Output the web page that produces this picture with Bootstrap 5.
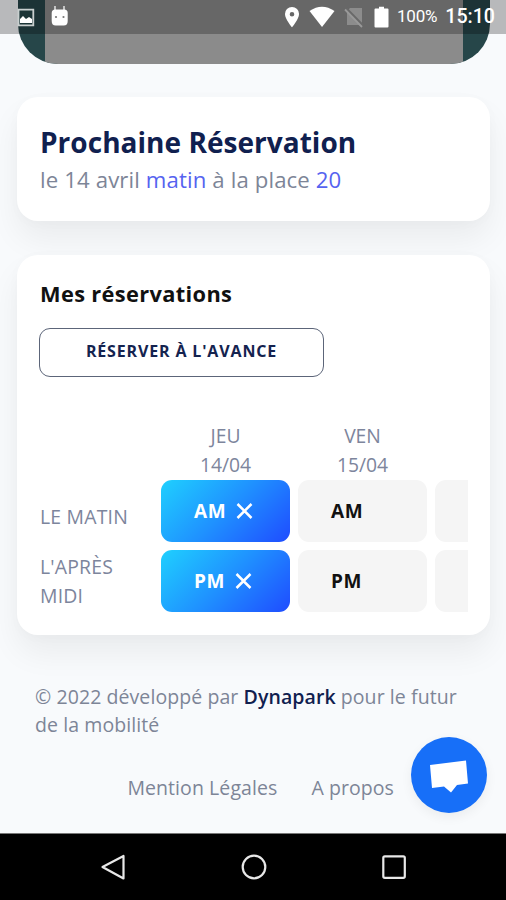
<!DOCTYPE html>
<html lang="fr">
<head>
<meta charset="utf-8">
<meta name="viewport" content="width=device-width, initial-scale=1">
<title>Dynapark</title>
<link href="https://cdn.jsdelivr.net/npm/bootstrap@5.3.0/dist/css/bootstrap.min.css" rel="stylesheet">
<style>
  body { font-family: "Open Sans", "Noto Sans", sans-serif; font-weight: 400; background: #f8fafc; color: #7d8597; }
  .screen { height: 900px; }
  .status-bar { height: 34px; background: rgba(0,0,0,.26); color: #fff; font-family: Roboto, sans-serif; font-weight: 400; z-index: 5; }
  .status-bar svg { flex: none; }
  .status-start { padding-left: 17px; gap: 16px; }
  .status-end { padding-right: 11px; }
  .battery-level { font-size: 17px; margin-left: 6px; letter-spacing: -.2px; }
  .clock { font-size: 19.6px; font-weight: 500; margin-left: 8px; margin-top: -1px; }
  .map-banner { height: 64px; margin: 0 16px 0 18px; padding: 0 27px; background: #264649; border-radius: 0 0 40px 40px; }
  .map-banner > div { background: #8b8b8b; }
  .panel { margin: 0 16px 0 17px; border: 0; border-radius: 21px; box-shadow: 0 18px 32px rgba(0,0,0,.06), 0 2px 14px rgba(0,0,0,.018); }
  .panel-next { height: 124px; margin-top: 33px; padding: 26px 23px 0; }
  .panel-list { height: 380px; margin-top: 34px; padding: 23px 22px 0 23px; }
  h1 { font-size: 28px; line-height: 38px; font-weight: 700; letter-spacing: .03px; color: #10204f; white-space: nowrap; }
  .next-text { font-size: 22.2px; line-height: 38px; letter-spacing: .12px; white-space: nowrap; }
  .next-text span { color: #5663f0; }
  h2 { font-size: 21.8px; line-height: 32px; font-weight: 700; letter-spacing: .35px; color: #111; }
  .btn-advance { width: 285px; height: 49px; margin-top: 18px; margin-left: -1px; border: 1px solid #5c6579; border-radius: 11px; color: #14234f; font-size: 16px; font-weight: 700; letter-spacing: .85px; }
  .slots { margin-top: 44px; display: grid; grid-template-columns: 113px repeat(3, 129px); grid-template-rows: 51px 62px 62px; column-gap: 8px; row-gap: 8px; overflow: hidden; }
  .slots .day { line-height: 29px; font-size: 19.3px; text-align: center; color: #7d859c; }
  .slots .period { font-size: 19.4px; letter-spacing: .2px; line-height: 29px; color: #7d859c; }
  .slots .period-am { padding-top: 10px; }
  .slot { border-radius: 11px; background: #f5f5f5; color: #111; font-weight: 700; font-size: 19px; letter-spacing: .6px; padding-left: 33px; }
  .slot.booked { background: linear-gradient(135deg, #1fd0fe 0%, #1f91ff 50%, #1f4cff 100%); color: #fff; gap: 10px; }
  footer { padding: 48px 30px 0 35px; font-size: 19.5px; letter-spacing: .08px; line-height: 28px; white-space: nowrap; }
  footer strong { color: #10204f; font-weight: 600; }
  .footer-links { margin-top: 35px; padding-right: 82px; gap: 34px; }
  .footer-links a { color: inherit; text-decoration: none; white-space: nowrap; }
  .chat { position: absolute; right: 19px; bottom: 87px; width: 76px; height: 76px; background: #176ff8; box-shadow: 0 4px 12px rgba(0,0,0,.06); padding: 0; }
  .nav-keys { height: 67px; background: #000; border-top: 1px solid #777; padding: 0 98px 0 99px; }
</style>
</head>
<body>
<div class="screen position-relative overflow-hidden d-flex flex-column">
  <header class="status-bar position-absolute top-0 start-0 w-100 d-flex justify-content-between align-items-center">
    <div class="status-start d-flex align-items-center">
      <svg width="18" height="34" viewBox="0 0 18 34"><path d="M1.500 9.700h14.800v15.600H1.500z" fill="#1b3436" stroke="#c9cfcf" stroke-width="1.800"/><path d="M3 23v-4l3-3 3 3 3-2 3 2v4z" fill="#fff"/></svg>
      <svg width="18" height="34" viewBox="0 0 18 34"><path d="M4 6v6M13 6v6" stroke="#ddd" stroke-width="1.600"/><path d="M.7 13q0-3.500 3.500-3.500h9q3.500 0 3.500 3.500v8q0 4.500-4 4.500h-8q-4 0-4-4.500z" fill="#fff"/><circle cx="5" cy="17" r="1.100" fill="#777"/><circle cx="12.500" cy="17" r="1.100" fill="#777"/></svg>
    </div>
    <div class="status-end d-flex align-items-center">
      <svg width="16" height="34" viewBox="-1 0 16 34"><path fill-rule="evenodd" d="M8 7a7 7 0 0 1 7 7.200C15 19 8 27.300 8 27.300S1 19 1 14.200A7 7 0 0 1 8 7zm0 5a2.300 2.300 0 1 0 0 4.600A2.300 2.300 0 0 0 8 12z" fill="#fff"/></svg>
      <svg class="ms-2" width="28" height="34" viewBox="-1 0 28 34"><path d="M1.500 11Q14 2.500 26.500 11L14 27z" fill="#fff"/></svg>
      <svg class="ms-2" width="20" height="34" viewBox="-1 0 20 34"><path d="M6 8h12v17H3V11z" fill="#8c8c8c"/><path d="M2 8.500l17 17.500" stroke="#696969" stroke-width="3"/><path d="M1 9.500l17 17.500" stroke="#999" stroke-width="1.800"/></svg>
      <svg class="ms-2" width="20" height="34" viewBox="0 0 20 34"><path d="M4.500 8.500H8V6.700h5v1.800h3.500q1 0 1 1v17q0 1-1 1h-12q-1 0-1-1v-17q0-1 1-1z" fill="#fff"/></svg>
      <span class="battery-level">100%</span>
      <span class="clock">15:10</span>
    </div>
  </header>

  <div class="map-banner flex-shrink-0 overflow-hidden"><div class="h-100"></div></div>

  <section class="card panel panel-next flex-shrink-0">
    <h1 class="mb-0">Prochaine Réservation</h1>
    <p class="next-text mb-0">le 14 avril <span>matin</span> à la place <span>20</span></p>
  </section>

  <section class="card panel panel-list flex-shrink-0">
    <h2 class="mb-0">Mes réservations</h2>
    <button class="btn btn-advance p-0 pb-1" type="button">RÉSERVER À L'AVANCE</button>
    <div class="slots">
      <div></div>
      <div class="day">JEU<br>14/04</div>
      <div class="day">VEN<br>15/04</div>
      <div></div>
      <div class="period period-am d-flex align-items-center">LE MATIN</div>
      <div class="slot booked d-flex align-items-center">AM
        <svg width="17" height="18" viewBox="0 0 17 18"><path d="M1.500 2l14 14m0-14l-14 14" stroke="#fff" stroke-width="2.500"/></svg></div>
      <div class="slot d-flex align-items-center">AM</div>
      <div class="slot"></div>
      <div class="period d-flex align-items-center">L'APRÈS<br>MIDI</div>
      <div class="slot booked d-flex align-items-center">PM
        <svg width="17" height="18" viewBox="0 0 17 18"><path d="M1.500 2l14 14m0-14l-14 14" stroke="#fff" stroke-width="2.500"/></svg></div>
      <div class="slot d-flex align-items-center">PM</div>
      <div class="slot"></div>
    </div>
  </section>

  <footer>
    <div>© 2022 développé par <strong>Dynapark</strong> pour le futur<br>de la mobilité</div>
    <div class="footer-links d-flex justify-content-end"><a href="#">Mention Légales</a><a href="#">A propos</a></div>
  </footer>

  <button class="btn chat rounded-circle border-0" type="button" aria-label="Chat">
    <svg class="d-block" width="76" height="76" viewBox="0 0 76 76"><path d="M19 28l36-4.500 2 23-11 1.500-6 7.500-7-6-12 1.500z" fill="#fff"/></svg>
  </button>

  <nav class="nav-keys mt-auto flex-shrink-0 d-flex justify-content-between align-items-center">
    <svg width="28" height="28" viewBox="0 0 28 28" fill="none" stroke="#e8e8e8" stroke-width="2.200" stroke-linejoin="round"><path d="M24.500 3v22.500L3.500 14z"/></svg>
    <svg width="28" height="28" viewBox="0 0 28 28" fill="none" stroke="#e8e8e8" stroke-width="2.200"><circle cx="14" cy="14" r="11.300"/></svg>
    <svg width="28" height="28" viewBox="0 0 28 28" fill="none" stroke="#e8e8e8" stroke-width="2.200"><rect x="3.300" y="3.300" width="21.500" height="21.500" rx="1.500"/></svg>
  </nav>
</div>
<script src="https://cdn.jsdelivr.net/npm/bootstrap@5.3.0/dist/js/bootstrap.bundle.min.js"></script>
</body>
</html>
